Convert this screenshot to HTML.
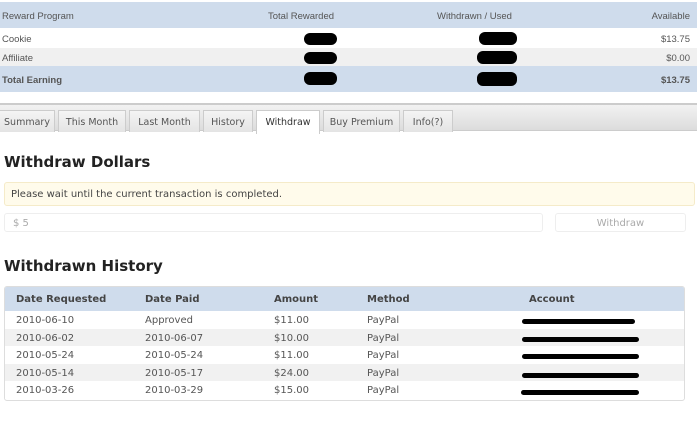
<!DOCTYPE html>
<html><head><meta charset="utf-8"><style>
*{margin:0;padding:0;box-sizing:border-box}
body{width:700px;height:436px;background:#fff;font-family:"Liberation Sans",sans-serif;position:relative;overflow:hidden;color:#444}
.abs{position:absolute}
.top{left:0;top:2px;width:697px;font-size:9.5px;color:#555}
.top .r{position:absolute;left:0;width:697px}
.blob{position:absolute;background:#000;border-radius:6px}
.tabs{left:0;top:103px;width:697px;height:28px;border-top:2px solid #ccc;background:linear-gradient(#f2f2f2,#dcdcdc);border-bottom:1px solid #ccc}
.tab{position:absolute;top:5px;height:22px;background:linear-gradient(#f4f4f4,#e4e4e4);border:1px solid #ccc;border-bottom:none;font-size:9.5px;color:#555;text-align:center;line-height:23px;font-family:"DejaVu Sans",sans-serif}
.tab.act{background:#fff;height:24px;top:5px;color:#333}
h2{position:absolute;font-size:15px;font-weight:bold;color:#222;font-family:"DejaVu Sans",sans-serif}
.hist{left:4px;top:286px;width:681px;height:115px;border:1px solid #ddd;border-radius:3px;overflow:hidden;font-size:10px;font-family:"DejaVu Sans",sans-serif;color:#555}
.hr{position:absolute;left:0;width:681px;height:17.6px;line-height:20px}
.hr span{position:absolute}
.bar{position:absolute;height:5px;background:#000;border-radius:3px}
</style></head><body>
<div class="abs top">
 <div class="r" style="top:0;height:26px;background:#cfdcec;line-height:29px">
  <span class="abs" style="left:2px">Reward Program</span>
  <span class="abs" style="left:268px">Total Rewarded</span>
  <span class="abs" style="left:437px">Withdrawn / Used</span>
  <span class="abs" style="right:7px">Available</span></div>
 <div class="r" style="top:26px;height:20px;line-height:24px;background:#fff">
  <span class="abs" style="left:2px">Cookie</span><span class="abs" style="right:7px">$13.75</span></div>
 <div class="r" style="top:46px;height:18px;line-height:22px;background:#f0f0f0">
  <span class="abs" style="left:2px">Affiliate</span><span class="abs" style="right:7px">$0.00</span></div>
 <div class="r" style="top:64px;height:26px;line-height:30px;background:#cfdcec;font-weight:bold;color:#555">
  <span class="abs" style="left:2px">Total Earning</span><span class="abs" style="right:7px">$13.75</span></div>
 <div class="blob" style="left:304px;top:31px;width:33px;height:12px"></div>
 <div class="blob" style="left:479px;top:30px;width:38px;height:13px"></div>
 <div class="blob" style="left:304px;top:50px;width:33px;height:12px"></div>
 <div class="blob" style="left:477px;top:49px;width:40px;height:13px"></div>
 <div class="blob" style="left:304px;top:70px;width:33px;height:13px"></div>
 <div class="blob" style="left:477px;top:70px;width:40px;height:14px"></div>
</div>
<div class="abs tabs">
 <div class="tab" style="left:-1px;width:56px">Summary</div>
 <div class="tab" style="left:58px;width:68px">This Month</div>
 <div class="tab" style="left:129px;width:71px">Last Month</div>
 <div class="tab" style="left:203px;width:50px">History</div>
 <div class="tab act" style="left:256px;width:64px">Withdraw</div>
 <div class="tab" style="left:323px;width:77px">Buy Premium</div>
 <div class="tab" style="left:403px;width:50px">Info(?)</div>
</div>
<h2 style="left:4px;top:153px">Withdraw Dollars</h2>
<div class="abs" style="left:4px;top:182px;width:691px;height:24px;background:#fffbeb;border:1px solid #f5ebc9;border-radius:3px;font-size:10px;line-height:24px;padding-left:6px;color:#444;font-family:'DejaVu Sans',sans-serif">Please wait until the current transaction is completed.</div>
<div class="abs" style="left:4px;top:213px;width:539px;height:19px;border:1px solid #eee;border-radius:3px;font-size:10px;line-height:20px;padding-left:8px;color:#aaa;font-family:'DejaVu Sans',sans-serif">$ 5</div>
<div class="abs" style="left:555px;top:213px;width:131px;height:19px;border:1px solid #eee;border-radius:3px;font-size:10px;line-height:20px;text-align:center;color:#aaa;font-family:'DejaVu Sans',sans-serif">Withdraw</div>
<h2 style="left:4px;top:257px">Withdrawn History</h2>
<div class="abs hist">
 <div class="hr" style="top:0;height:24px;line-height:25px;background:#cfdcec;color:#444;font-weight:bold">
  <span style="left:11px">Date Requested</span><span style="left:140px">Date Paid</span><span style="left:269px">Amount</span><span style="left:362px">Method</span><span style="left:524px">Account</span></div>
 <div class="hr" style="top:24px;background:#fff"><span style="left:11px">2010-06-10</span><span style="left:140px">Approved</span><span style="left:269px">$11.00</span><span style="left:362px">PayPal</span><div class="bar" style="left:517px;top:8px;width:113px"></div></div>
 <div class="hr" style="top:41.6px;background:#f1f1f1"><span style="left:11px">2010-06-02</span><span style="left:140px">2010-06-07</span><span style="left:269px">$10.00</span><span style="left:362px">PayPal</span><div class="bar" style="left:517px;top:8px;width:117px"></div></div>
 <div class="hr" style="top:59.2px;background:#fff"><span style="left:11px">2010-05-24</span><span style="left:140px">2010-05-24</span><span style="left:269px">$11.00</span><span style="left:362px">PayPal</span><div class="bar" style="left:517px;top:8px;width:117px"></div></div>
 <div class="hr" style="top:76.8px;background:#f1f1f1"><span style="left:11px">2010-05-14</span><span style="left:140px">2010-05-17</span><span style="left:269px">$24.00</span><span style="left:362px">PayPal</span><div class="bar" style="left:517px;top:9px;width:117px"></div></div>
 <div class="hr" style="top:94.4px;background:#fff"><span style="left:11px">2010-03-26</span><span style="left:140px">2010-03-29</span><span style="left:269px">$15.00</span><span style="left:362px">PayPal</span><div class="bar" style="left:516px;top:9px;width:118px"></div></div>
</div>
</body></html>
